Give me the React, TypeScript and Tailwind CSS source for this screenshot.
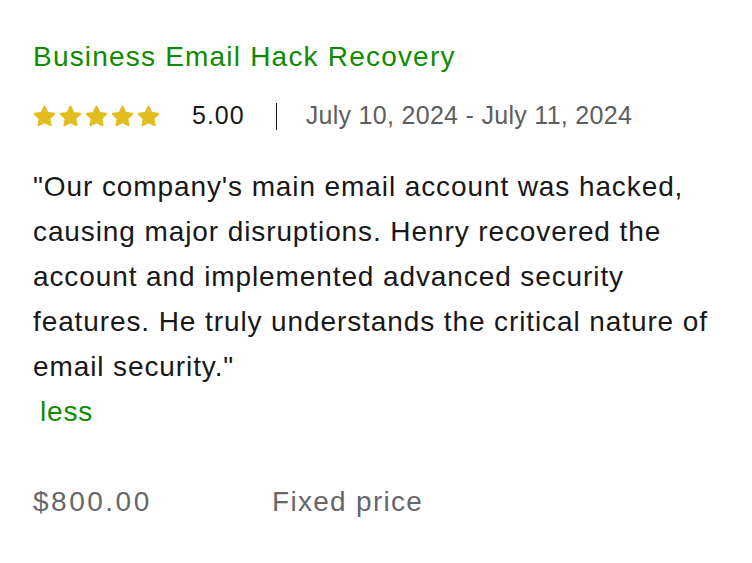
const font = { fontFamily: '"Liberation Sans", Arial, sans-serif' };

function Star() {
  return (
    <svg width="23" height="22" viewBox="0.5 0.5 23 22" className="shrink-0">
      <path
        d="M12 1.2c.5 0 .9.3 1.1.7l2.6 5.6 6 .8c.9.1 1.3 1.3.6 1.9l-4.4 4.2 1.1 6c.2.9-.8 1.6-1.6 1.2L12 18.7l-5.4 2.9c-.8.4-1.8-.3-1.6-1.2l1.1-6L1.7 10.2c-.7-.6-.3-1.8.6-1.9l6-.8 2.6-5.6c.2-.4.6-.7 1.1-.7z"
        fill="#e2bd1f"
      />
    </svg>
  );
}

export default function App() {
  return (
    <div className="w-[752px] h-[563px] bg-white" style={font}>
      <div className="pl-[33px] pt-[39px]">
        <h2 className="text-[28px] leading-[36px] tracking-[1.2px] text-[#108a00]">
          Business Email Hack Recovery
        </h2>
        <div className="flex items-center mt-[26px] h-[30px]">
          <div className="flex gap-[3px]">
            <Star />
            <Star />
            <Star />
            <Star />
            <Star />
          </div>
          <span className="ml-[32px] text-[25px] tracking-[1px] text-[#181818]">5.00</span>
          <span className="ml-[31px] w-px h-[27px] bg-[#181818]" />
          <span className="ml-[29px] text-[25px] tracking-[0.3px] text-[#5e5e5e]">
            July 10, 2024 - July 11, 2024
          </span>
        </div>
        <p className="mt-[33px] w-[708px] text-[28px] leading-[45px] tracking-[0.9px] text-[#181818]">
          "Our company's main email account was hacked, causing major
          disruptions. Henry recovered the account and implemented advanced
          security features. He truly understands the critical nature of
          email security."
        </p>
        <button className="block ml-[7px] text-[28px] leading-[45px] tracking-[0.8px] text-[#108a00]">
          less
        </button>
        <div className="flex mt-[45px] text-[28px] leading-[45px] text-[#676767]">
          <span className="w-[239px] tracking-[2.5px]">$800.00</span>
          <span className="tracking-[1.3px]">Fixed price</span>
        </div>
      </div>
    </div>
  );
}
